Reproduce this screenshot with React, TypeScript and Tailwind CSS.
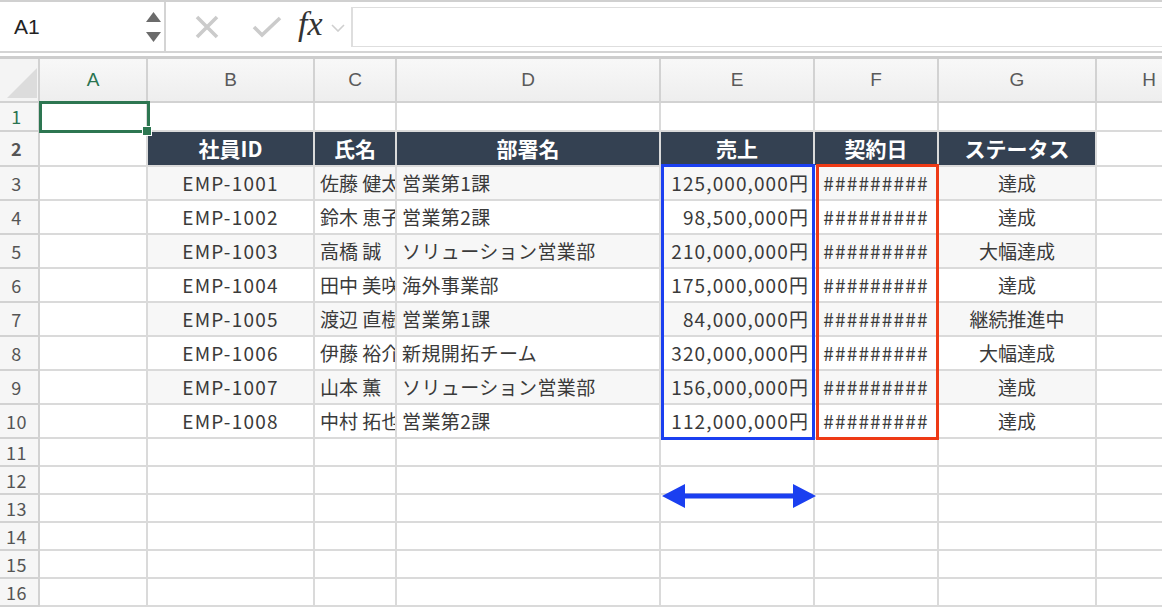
import React from 'react';

const cols = [
  { key: 'A', w: 'w-[108px]' },
  { key: 'B', w: 'w-[167px]' },
  { key: 'C', w: 'w-[82px]' },
  { key: 'D', w: 'w-[264px]' },
  { key: 'E', w: 'w-[154px]' },
  { key: 'F', w: 'w-[124px]' },
  { key: 'G', w: 'w-[158px]' },
  { key: 'H', w: 'w-[106px]' },
  { key: 'I', w: 'w-[120px]' },
];

const rows = [
  { id: 'EMP-1001', name: '佐藤 健太', dept: '営業第1課', sales: '125,000,000円', status: '達成' },
  { id: 'EMP-1002', name: '鈴木 恵子', dept: '営業第2課', sales: '98,500,000円', status: '達成' },
  { id: 'EMP-1003', name: '高橋 誠', dept: 'ソリューション営業部', sales: '210,000,000円', status: '大幅達成' },
  { id: 'EMP-1004', name: '田中 美咲', dept: '海外事業部', sales: '175,000,000円', status: '達成' },
  { id: 'EMP-1005', name: '渡辺 直樹', dept: '営業第1課', sales: '84,000,000円', status: '継続推進中' },
  { id: 'EMP-1006', name: '伊藤 裕介', dept: '新規開拓チーム', sales: '320,000,000円', status: '大幅達成' },
  { id: 'EMP-1007', name: '山本 薫', dept: 'ソリューション営業部', sales: '156,000,000円', status: '達成' },
  { id: 'EMP-1008', name: '中村 拓也', dept: '営業第2課', sales: '112,000,000円', status: '達成' },
];

const cell = 'shrink-0 border-r-2 border-b-2 border-[#dadada] overflow-hidden whitespace-nowrap flex items-center';
const jp = { fontFamily: '"Noto Sans CJK JP", sans-serif' };

function RowHead({ n, h, active }: { n: number; h: string; active?: boolean }) {
  return (
    <div
      className={`shrink-0 w-[40px] ${h} bg-[#f6f6f6] border-r-2 border-b-2 border-[#d2d2d2] flex items-center justify-center pr-[5px] text-[18px] tracking-[0.5px] ${active ? 'text-[#2a7350]' : 'text-[#555]'}`}
      style={jp}
    >
      {n}
    </div>
  );
}

function EmptyRow({ n, h }: { n: number; h: string }) {
  return (
    <div className="flex">
      <RowHead n={n} h={h} />
      {cols.map((c) => (
        <div key={c.key} className={`${cell} ${c.w} ${h}`} />
      ))}
    </div>
  );
}

export default function App() {
  return (
    <div className="w-[1162px] h-[608px] overflow-hidden bg-white relative select-none" style={jp}>
      {/* Formula bar */}
      <div className="h-[59px] border-t-2 border-[#d0d0d0] flex">
        <div className="w-[166px] h-[51px] border-r-2 border-b-2 border-[#d4d4d4] flex items-center justify-between pl-[14px] pr-[3px]">
          <span className="text-[21px] text-[#222]" style={{ fontFamily: '"Liberation Sans", Arial, sans-serif' }}>
            A1
          </span>
          <div className="flex flex-col gap-[10px]">
            <svg width="15" height="10" viewBox="0 0 15 10">
              <path d="M7.5 0 L15 10 L0 10 Z" fill="#6b6b6b" />
            </svg>
            <svg width="15" height="10" viewBox="0 0 15 10">
              <path d="M0 0 L15 0 L7.5 10 Z" fill="#6b6b6b" />
            </svg>
          </div>
        </div>
        <div className="flex-1 flex flex-col">
          <div className="h-[51px] border-b-2 border-[#d4d4d4] flex items-center">
            <svg className="ml-[29px]" width="24" height="24" viewBox="0 0 24 24">
              <path d="M2 2 L22 22 M22 2 L2 22" stroke="#cbcbcb" strokeWidth="3.6" />
            </svg>
            <svg className="ml-[33px]" width="30" height="22" viewBox="0 0 30 22">
              <path d="M2 11 L10 19 L28 2" stroke="#cbcbcb" strokeWidth="3.6" fill="none" />
            </svg>
            <span
              className="ml-[16px] text-[34px] italic text-[#333] leading-none -mt-[6px]"
              style={{ fontFamily: '"Liberation Serif", "Times New Roman", serif' }}
            >
              fx
            </span>
            <svg className="ml-[8px] mt-[2px]" width="14" height="8" viewBox="0 0 14 8">
              <path d="M1 1 L7 7 L13 1" stroke="#cfcfcf" strokeWidth="1.6" fill="none" />
            </svg>
            <div className="ml-[6px] flex-1 h-[40px] border-l-2 border-t border-b border-[#dedede]" />
          </div>
          <div className="flex-1" />
        </div>
      </div>
      <div className="absolute left-0 top-[56px] w-full h-[3px] bg-[#cdcdcd]" />

      {/* Grid */}
      <div className="relative">
        {/* column headers */}
        <div className="flex">
          <div className="shrink-0 w-[40px] h-[44px] bg-[#f4f4f4] border-r-2 border-b-2 border-[#d2d2d2] relative">
            <svg className="absolute left-[7px] top-[9px]" width="30" height="30" viewBox="0 0 30 30">
              <path d="M30 0 L30 30 L0 30 Z" fill="#dcdcdc" />
            </svg>
          </div>
          {cols.map((c) => (
            <div
              key={c.key}
              className={`shrink-0 ${c.w} h-[44px] bg-gradient-to-b from-[#f8f8f8] to-[#eeeeee] border-r-2 border-b-2 border-[#d2d2d2] flex items-center justify-center text-[19px] ${c.key === 'A' ? 'text-[#2a7350]' : 'text-[#5a5a5a]'}`}
              style={{ fontFamily: '"Liberation Sans", Arial, sans-serif' }}
            >
              {c.key}
            </div>
          ))}
        </div>

        {/* row 1 */}
        <div className="flex">
          <RowHead n={1} h="h-[29px]" active />
          {cols.map((c) => (
            <div key={c.key} className={`${cell} ${c.w} h-[29px]`} />
          ))}
        </div>

        {/* row 2: table header */}
        <div className="flex text-white font-bold text-[21px]">
          <RowHead n={2} h="h-[35px]" />
          <div className={`${cell} w-[108px] h-[35px]`} />
          <div className={`${cell} w-[167px] h-[35px] bg-[#344152] justify-center`}>社員ID</div>
          <div className={`${cell} w-[82px] h-[35px] bg-[#344152] justify-center`}>氏名</div>
          <div className={`${cell} w-[264px] h-[35px] bg-[#344152] justify-center`}>部署名</div>
          <div className={`${cell} w-[154px] h-[35px] bg-[#344152] justify-center`}>売上</div>
          <div className={`${cell} w-[124px] h-[35px] bg-[#344152] justify-center`}>契約日</div>
          <div className={`${cell} w-[158px] h-[35px] bg-[#344152] justify-center`}>ステータス</div>
          <div className={`${cell} w-[106px] h-[35px]`} />
          <div className={`${cell} w-[120px] h-[35px]`} />
        </div>

        {/* data rows */}
        {rows.map((r, i) => {
          const bg = i % 2 === 0 ? 'bg-[#f7f7f7]' : 'bg-white';
          return (
            <div key={r.id} className="flex text-[19px] text-[#3a3a3a]">
              <RowHead n={i + 3} h="h-[34px]" />
              <div className={`${cell} w-[108px] h-[34px]`} />
              <div className={`${cell} w-[167px] h-[34px] ${bg} justify-center tracking-[1.2px]`}>{r.id}</div>
              <div className={`${cell} w-[82px] h-[34px] ${bg} pl-[5px]`}>{r.name}</div>
              <div className={`${cell} w-[264px] h-[34px] ${bg} pl-[5px] tracking-[0.4px]`}>{r.dept}</div>
              <div className={`${cell} w-[154px] h-[34px] ${bg} justify-end pr-[4px] tracking-[1.1px]`}>{r.sales}</div>
              <div className={`${cell} w-[124px] h-[34px] ${bg} justify-center tracking-[1.2px]`}>#########</div>
              <div className={`${cell} w-[158px] h-[34px] ${bg} justify-center`}>{r.status}</div>
              <div className={`${cell} w-[106px] h-[34px]`} />
              <div className={`${cell} w-[120px] h-[34px]`} />
            </div>
          );
        })}

        {[11, 12, 13, 14, 15, 16].map((n) => (
          <EmptyRow key={n} n={n} h="h-[28px]" />
        ))}

        {/* selected cell A1 */}
        <div className="absolute left-[39px] top-[42px] w-[111px] h-[32px] border-[3px] border-[#2d7651]" />
        <div className="absolute left-[142px] top-[67px] w-[10px] h-[10px] bg-[#2d7651] border border-white" />

        {/* highlight boxes */}
        <div className="absolute left-[661px] top-[105px] w-[154px] h-[276px] border-[3px] border-[#1b3ff0]" />
        <div className="absolute left-[816px] top-[105px] w-[123px] h-[276px] border-[3px] border-[#ee3a16]" />

        {/* width arrow */}
        <svg className="absolute left-[662px] top-[425px]" width="154" height="24" viewBox="0 0 154 24">
          <path d="M0 12 L23 0 L23 9.5 L131 9.5 L131 0 L154 12 L131 24 L131 14.5 L23 14.5 L23 24 Z" fill="#1b3ff0" />
        </svg>
      </div>
    </div>
  );
}
